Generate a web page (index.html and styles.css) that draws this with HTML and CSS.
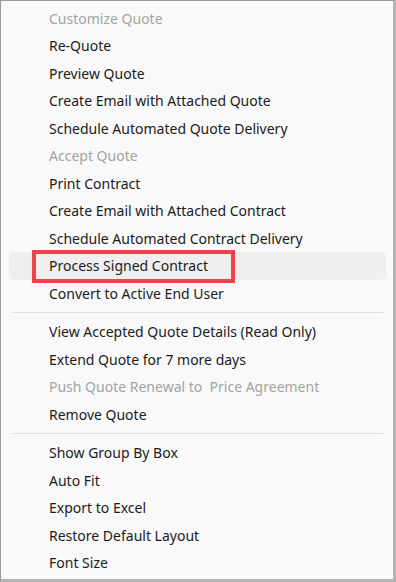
FILE: index.html
```html
<!DOCTYPE html>
<html lang="en">
  <head>
    <meta charset="UTF-8" />
    <meta name="viewport" content="width=device-width, initial-scale=1.0" />
    <title>Quote Menu</title>
    <link rel="stylesheet" href="styles.css">
  </head>
  <body>
    <div class="menu">
      <div class="item disabled">Customize Quote</div>
      <div class="item">Re-Quote</div>
      <div class="item">Preview Quote</div>
      <div class="item">Create Email with Attached Quote</div>
      <div class="item">Schedule Automated Quote Delivery</div>
      <div class="item disabled">Accept Quote</div>
      <div class="item">Print Contract</div>
      <div class="item">Create Email with Attached Contract</div>
      <div class="item">Schedule Automated Contract Delivery</div>
      <div class="item hover"><span class="callout">Process Signed Contract</span></div>
      <div class="item">Convert to Active End User</div>
      <div class="separator"></div>
      <div class="item">View Accepted Quote Details (Read Only)</div>
      <div class="item">Extend Quote for 7 more days</div>
      <div class="item disabled">Push Quote Renewal to&nbsp; Price Agreement</div>
      <div class="item">Remove Quote</div>
      <div class="separator"></div>
      <div class="item">Show Group By Box</div>
      <div class="item">Auto Fit</div>
      <div class="item">Export to Excel</div>
      <div class="item">Restore Default Layout</div>
      <div class="item">Font Size</div>
    </div>
  </body>
</html>
```

FILE: styles.css
```css
html,
body {
  margin: 0;
  padding: 0;
  background-color: #fff;
}
body {
  font-family: "Noto Sans", "Open Sans", sans-serif;
  width: 396px;
  height: 582px;
}
.menu {
  box-sizing: border-box;
  width: 396px;
  height: 582px;
  background-color: #f9f9f9;
  border: 1px solid #9a9a9a;
  border-right: 3px solid #b4b4b4;
  border-bottom: 3px solid #b4b4b4;
  padding: 3.5px 7px 0 8px;
}
.item {
  height: 27.5px;
  line-height: 27px;
  padding-left: 40px;
  font-size: 14px;
  color: #1b1b1b;
  border-radius: 5px;
  white-space: nowrap;
}
.disabled {
  color: #a3a3a3;
}
.hover {
  background-color: #efefef;
  position: relative;
}
/* red annotation box around the highlighted entry */
.callout {
  position: relative;
}
.callout::after {
  content: "";
  position: absolute;
  left: -17px;
  right: -27px;
  top: -6px;
  bottom: -8px;
  border: 4px solid #f2414a;
}
.separator {
  height: 1px;
  background-color: #e0e0e0;
  margin: 4.5px 3px 5.5px 3px;
}
```
